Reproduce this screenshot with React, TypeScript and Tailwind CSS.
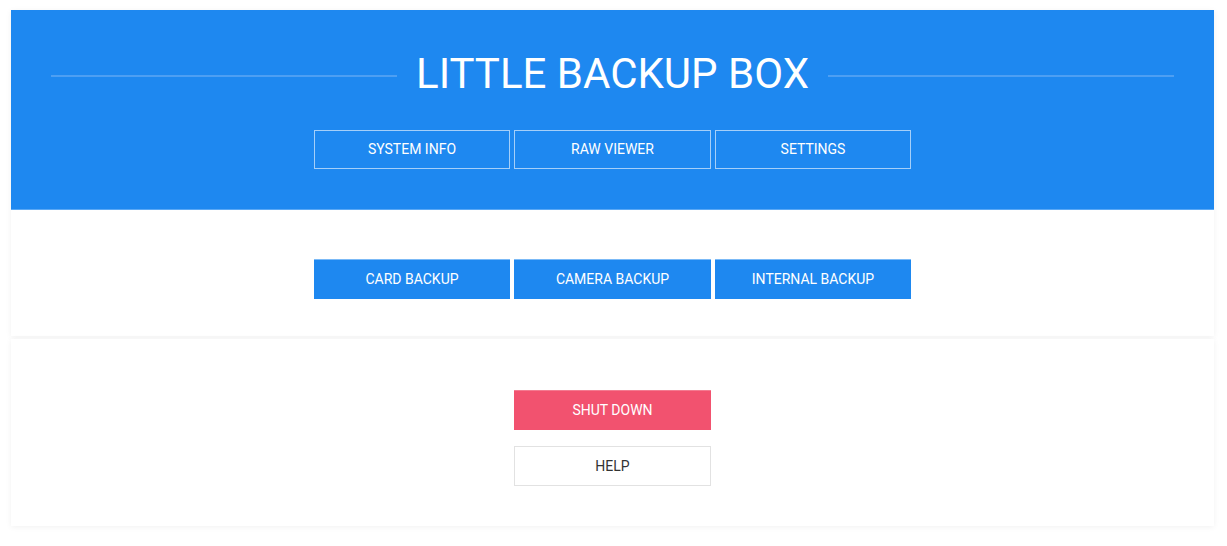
import React from "react";

const font = { fontFamily: "Roboto, 'Liberation Sans', sans-serif" };

const widths = ["w-[196px]", "w-[197px]", "w-[196px]"];

export default function App() {
  return (
    <div className="min-h-[546px] bg-white pt-[10px] pl-[11px]" style={font}>
      <div className="w-[1203px] bg-white shadow-[0_1px_6px_rgba(0,0,0,0.06)]">
        <div className="h-[200px] bg-[#1e88f0] border-b border-[#5aa8f5] px-[40px] pt-[44px]">
          <div className="flex items-center gap-[19px]">
            <div className="flex-1 h-[2px] mt-[3px] bg-[#4d9ff3]" />
            <h1 className="text-[42px] leading-[40px] text-white font-normal">LITTLE BACKUP BOX</h1>
            <div className="flex-1 h-[2px] mt-[3px] bg-[#4d9ff3]" />
          </div>
          <div className="flex justify-center gap-[4px] mt-[36px]">
            {["SYSTEM INFO", "RAW VIEWER", "SETTINGS"].map((t, i) => (
              <div
                key={t}
                className={`${widths[i]} h-[39px] border border-white/60 text-white text-[14px] flex items-center justify-center`}
              >
                {t}
              </div>
            ))}
          </div>
        </div>
        <div className="h-[126px] flex justify-center pt-[49px] gap-[4px]">
          {["CARD BACKUP", "CAMERA BACKUP", "INTERNAL BACKUP"].map((t, i) => (
            <div
              key={t}
              className={`${widths[i]} h-[40px] bg-[#1e88f0] border-t border-[#7bbaf7] text-white text-[14px] flex items-center justify-center`}
            >
              {t}
            </div>
          ))}
        </div>
      </div>
      <div className="w-[1203px] mt-[3px] h-[187px] bg-white shadow-[0_1px_6px_rgba(0,0,0,0.06)] flex flex-col items-center pt-[51px] gap-[16px]">
        <div className="w-[197px] h-[40px] bg-[#f2526f] border-t border-[#f47a90] text-white text-[14px] flex items-center justify-center">
          SHUT DOWN
        </div>
        <div className="w-[197px] h-[40px] bg-white border border-[#e2e2e2] text-[#333] text-[14px] flex items-center justify-center">
          HELP
        </div>
      </div>
    </div>
  );
}
